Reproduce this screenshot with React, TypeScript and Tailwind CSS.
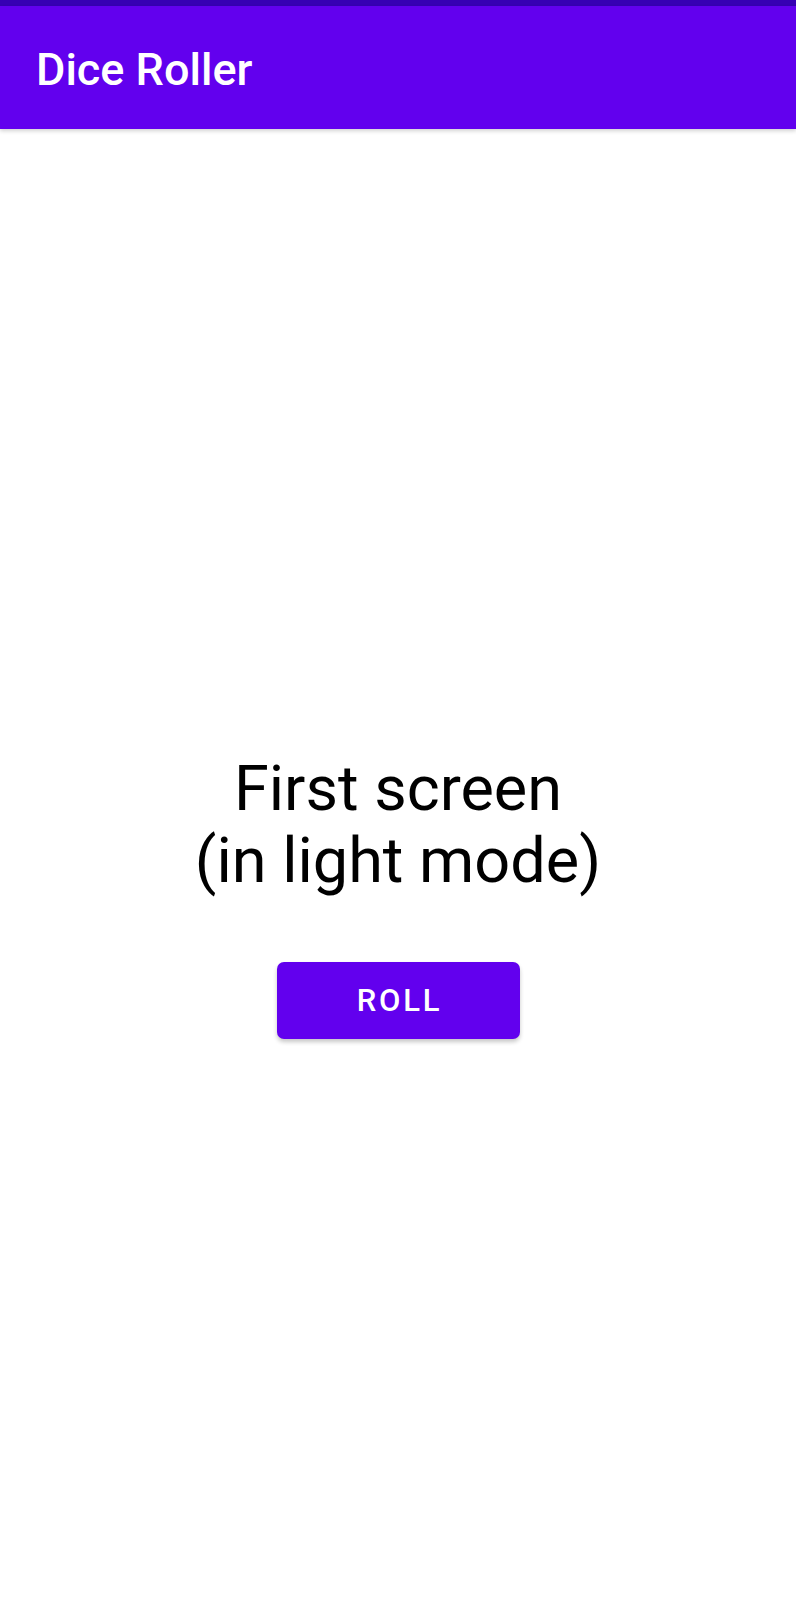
import React from "react";

export default function App() {
  return (
    <div
      className="w-[796px] h-[1600px] bg-white flex flex-col overflow-hidden"
      style={{ fontFamily: "Roboto, 'Noto Sans', sans-serif" }}
    >
      <div className="h-[6px] bg-[#3700b3] shrink-0" />
      <header className="h-[123px] bg-[#6200ee] shrink-0 flex items-center pl-[36px] shadow-[0_2px_4px_rgba(0,0,0,0.18)] relative z-10">
        <h1 className="text-white text-[45px] font-medium leading-none tracking-[0px] pt-[4px]">
          Dice Roller
        </h1>
      </header>
      <main className="flex-1 flex flex-col items-center pt-[624px]">
        <p className="text-black text-[63px] leading-[72px] text-center font-normal">
          First screen
          <br />
          (in light mode)
        </p>
        <button className="mt-[65px] w-[243px] h-[77px] rounded-[7px] bg-[#6200ee] text-white text-[31px] font-medium tracking-[0.09em] shadow-[0_3px_4px_rgba(0,0,0,0.22)] flex items-center justify-center pl-[3px] pt-[2px]">
          ROLL
        </button>
      </main>
    </div>
  );
}
